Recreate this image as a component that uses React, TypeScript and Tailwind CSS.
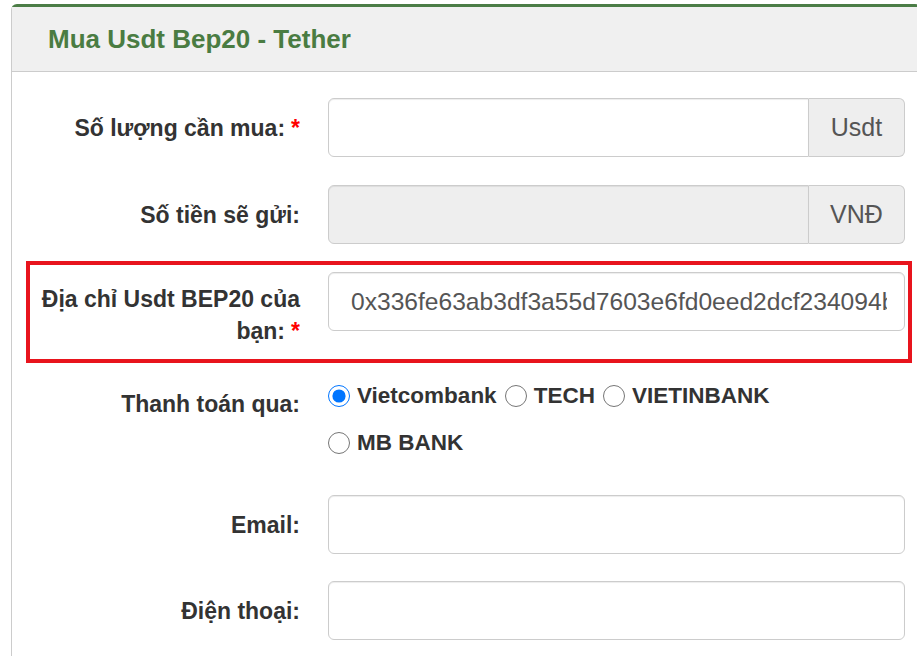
import type {ReactNode} from 'react'

const font = "font-['Liberation_Sans',Arial,sans-serif]"

const Label = ({children, required, className = ''}: {children: ReactNode; required?: boolean; className?: string}) => (
  <label className={`text-right text-[23px] leading-[32px] font-bold text-[#333] ${className}`}>
    {children}
    {required && <span className="ml-[6px] text-[#ff0000]">*</span>}
  </label>
)

const TextBox = ({value = '', disabled, addon}: {value?: string; disabled?: boolean; addon?: string}) => (
  <div className="flex h-[59px] w-[577px]">
    <input
      readOnly
      value={value}
      disabled={disabled}
      className={`h-full min-w-0 flex-1 border border-[#ccc] pr-[17px] pl-[22px] text-[24.6px] text-[#555] shadow-[inset_0_1px_1px_rgba(0,0,0,0.075)] outline-none ${
        addon ? 'rounded-l-[6px]' : 'rounded-[6px]'
      } ${disabled ? 'bg-[#eee]' : 'bg-white'}`}
    />
    {addon && (
      <span className="flex w-[96px] items-center justify-center rounded-r-[6px] border border-l-0 border-[#ccc] bg-[#eee] text-[25px] text-[#555]">
        {addon}
      </span>
    )}
  </div>
)

const Radio = ({name, checked}: {name: string; checked?: boolean}) => (
  <label className="mr-[8px] inline-flex items-center gap-[7px] text-[22.5px] font-bold text-[#333]">
    <input type="radio" name="bank" defaultChecked={checked} className="m-0 h-[22px] w-[22px] accent-[#0075ff]" />
    {name}
  </label>
)

export default function App() {
  return (
    <div className={`h-[656px] w-[917px] overflow-hidden bg-white pt-[4px] pl-[11px] ${font}`}>
      <div className="h-[700px] w-[910px] rounded-t-[6px] border border-t-[3px] border-[#ccc] border-t-[#4b7d46]">
        {/* tiêu đề */}
        <div className="flex h-[65px] items-center border-b border-[#ccc] bg-[#f0f0f0] pl-[36px]">
          <h3 className="text-[26px] font-bold text-[#4a7c42]">Mua Usdt Bep20 - Tether</h3>
        </div>

        <div className="flex flex-col pt-[26px] pl-[14px]">
          <div className="flex items-center gap-[28px]">
            <Label required className="w-[274px]">Số lượng cần mua:</Label>
            <TextBox addon="Usdt" />
          </div>

          <div className="mt-[28px] flex items-center gap-[28px]">
            <Label className="w-[274px]">Số tiền sẽ gửi:</Label>
            <TextBox disabled addon="VNĐ" />
          </div>

          {/* ô địa chỉ ví được đánh dấu */}
          <div className="mt-[17px] flex h-[102px] w-[886px] items-start gap-[28px] border-4 border-[#e8141d]">
            <Label required className="mt-[18px] w-[270px]">
              Địa chỉ Usdt BEP20 của bạn:
            </Label>
            <div className="mt-[7px]">
              <TextBox value="0x336fe63ab3df3a55d7603e6fd0eed2dcf234094b" />
            </div>
          </div>

          <div className="mt-[9px] flex items-start gap-[28px]">
            <Label className="mt-[16px] w-[274px]">Thanh toán qua:</Label>
            <div className="flex w-[560px] flex-wrap">
              <div className="flex h-[47px] items-center">
                <Radio name="Vietcombank" checked />
                <Radio name="TECH" />
                <Radio name="VIETINBANK" />
              </div>
              <div className="flex h-[47px] w-full items-center">
                <Radio name="MB BANK" />
              </div>
            </div>
          </div>

          <div className="mt-[29px] flex items-center gap-[28px]">
            <Label className="w-[274px]">Email:</Label>
            <TextBox />
          </div>

          <div className="mt-[27px] flex items-center gap-[28px]">
            <Label className="w-[274px]">Điện thoại:</Label>
            <TextBox />
          </div>
        </div>
      </div>
    </div>
  )
}
